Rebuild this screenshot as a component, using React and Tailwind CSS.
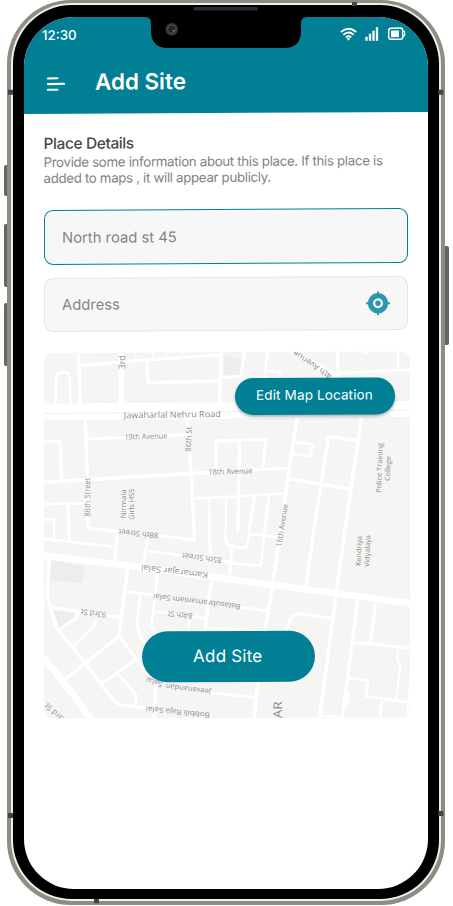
import React from 'react';

// Street segments, grouped by map quadrant: [path, stroke width]
const quadrants = [
  {
    at: 'translate(40 345) scale(0.33333)',
    roads: [
      ['M0 199 L580 197', 50],
      ['M117 20 L122 180', 11],
      ['M122 60 L320 44 L545 30', 11],
      ['M246 20 V180', 18],
      ['M322 44 L325 112 L545 108', 11],
      ['M545 20 L540 180', 10],
      ['M545 97 H585', 9],
      ['M47 180 L50 92 Q52 80 70 81 Q88 80 90 92 L93 180', 9],
      ['M288 20 V34', 8],
      ['M340 20 V32', 8],
      ['M385 20 V30', 8],
      ['M430 20 V28', 8],
      ['M137 222 L144 400 L145 548 L250 560', 11],
      ['M144 281 L440 268', 10],
      ['M442 225 L455 385 L465 575', 11],
      ['M10 410 L455 385 L570 380', 12],
      ['M10 288 H62 L67 405', 11],
      ['M530 375 V288 H580', 11],
      ['M10 475 L140 473', 9],
      ['M85 478 L90 590', 10],
      ['M10 522 H43 V590', 9],
      ['M465 460 L580 455', 9],
      ['M508 460 L512 575', 9],
    ],
  },
  {
    at: 'translate(225 345) scale(0.33333)',
    roads: [
      ['M0 196 L560 194', 48],
      ['M0 98 L50 93 L60 15', 9],
      ['M130 15 L120 100', 9],
      ['M128 80 H167 V98', 9],
      ['M190 10 L350 105', 20],
      ['M340 15 V100', 10],
      ['M340 86 L560 76', 9],
      ['M520 15 V76', 9],
      ['M423 15 V28', 13],
      ['M218 215 L190 400 L168 555', 12],
      ['M412 215 L380 430 L362 555', 12],
      ['M400 288 L312 275 L290 415 L268 555', 11],
      ['M193 403 L380 433', 11],
      ['M207 293 L265 298 L258 335 L205 328', 9],
      ['M0 287 L125 284 L115 370', 10],
      ['M45 287 L40 560', 11],
      ['M80 376 L192 370', 10],
      ['M0 457 L180 446', 9],
      ['M90 457 L72 565', 9],
      ['M133 455 L118 570', 9],
      ['M5 457 V555', 9],
    ],
  },
  {
    at: 'translate(40 530) scale(0.33333)',
    roads: [
      ['M10 74 L270 106 L580 149', 22],
      ['M0 23 L225 49', 9],
      ['M235 0 L225 95', 10],
      ['M325 20 L313 100', 10],
      ['M325 62 L550 92 L580 95', 9],
      ['M350 15 L465 30 V-10', 9],
      ['M509 -10 L513 80', 10],
      ['M30 85 L22 190 L35 240 L55 300 L100 350 L185 462 Q220 512 245 525 L330 533', 11],
      ['M30 230 L240 260', 10],
      ['M265 115 L238 315 L300 400 L340 450', 11],
      ['M262 185 L350 195', 9],
      ['M115 245 L112 262 L55 300', 9],
      ['M172 268 L165 285 L100 348', 9],
      ['M238 318 L70 452', 10],
      ['M295 383 L185 462', 10],
      ['M235 430 L290 495 L285 530', 9],
      ['M302 195 L293 275 Q294 320 325 350', 9],
      ['M355 125 L335 290 L350 320', 9],
      ['M345 243 L500 265', 9],
      ['M515 155 L495 305', 11],
      ['M450 270 L445 305', 9],
      ['M497 293 L680 304', 9],
      ['M10 378 L95 485 L165 580', 21],
      ['M350 455 L342 575', 11],
      ['M500 487 L600 496', 9],
    ],
  },
  {
    at: 'translate(225 530) scale(0.33333)',
    roads: [
      ['M0 146 L560 222', 21],
      ['M168 0 L145 160 L120 310', 12],
      ['M102 450 L88 570', 12],
      ['M268 0 L243 178', 11],
      ['M362 0 L335 190 L285 570', 12],
      ['M45 231 L130 243', 9],
      ['M183 310 L197 268 Q205 250 225 252 L320 266', 11],
      ['M400 212 L375 400 L352 570', 11],
      ['M453 220 L438 340', 10],
      ['M385 338 L560 356', 10],
      ['M372 445 L430 454 L424 500 L560 520', 9],
      ['M520 360 L518 396 L528 400 L515 512', 7],
      ['M472 515 L467 570', 10],
      ['M372 487 Q376 515 360 535', 9],
      ['M0 493 L95 502', 9],
      ['M285 558 L355 563', 9],
      ['M0 97 L108 108 L122 0', 9],
      ['M0 0 L8 46 L65 55 L75 12 L160 22', 9],
      ['M22 55 L15 145', 9],
      ['M40 0 L41 6', 10],
      ['M560 430 L548 570', 8],
    ],
  },
];

// Street labels: [text, centre x, centre y, rotation, length, font size]
const labels = [
  ['Jawaharlal Nehru Road', 172.8, 414.3, -0.6, 97, 8.6],
  ['19th Avenue', 146.3, 436, -1.5, 43, 7.2],
  ['3rd', 122.2, 362, -90, 14, 9],
  ['86th St', 189, 439, -88, 25, 7.6],
  ['86th Street', 88, 496.5, -90, 39, 7.6],
  ['Nirmala', 123.8, 503.5, -90, 29, 7.2],
  ['Girls HSS', 132, 504, -90, 31, 7.2],
  ['18th Avenue', 230.8, 471.3, -1.5, 44, 7.2],
  ['88th Street', 138.8, 533.5, 186, 40, 7.6],
  ['85th Street', 202.3, 558, 187, 40, 7.6],
  ['Kamarajar Salai', 175, 571.5, 187, 67, 8.6],
  ['Balasubramaniam Salai', 197.3, 601.5, 187, 88, 7.4],
  ['84th St', 180.5, 614.8, 185, 25, 7.6],
  ['93rd St', 94, 613, 188, 26, 7.6],
  ['Jeevanandan', 188.8, 689, 187, 45, 7.4],
  ['Salai', 155, 681.8, 203, 17, 7.4],
  ['Bobbili Raja Salai', 178.3, 712, 186, 64, 7.4],
  ['93rd St', 56, 713, 222, 27, 7.6],
  ['16th Avenue', 282.3, 525.5, -81, 43, 7.6],
  ['4th Avenue', 312.8, 365, 214, 45, 8.2],
  ['Police Training', 379.8, 468.5, -88, 50, 7],
  ['College', 388.2, 469, -88, 25, 7],
  ['Kendriya', 359.3, 551.5, -88, 30, 7],
  ['Vidyalaya', 367.8, 551.5, -88, 32, 7],
  ['AR', 278.5, 710, -90, 17, 12],
];

function StreetMap() {
  return (
    <svg viewBox="44.5 352 365.5 366" preserveAspectRatio="none" className="block h-[366px] w-[365.5px]">
      <rect x="44" y="352" width="367" height="367" fill="#f5f5f4" />
      <g fill="#eceeed">
        <path d="M51.500 559.500 L85.700 566 L83.300 582.600 L50 580Z" />
        <path d="M51.500 609 L75 611.500 L72 621 L58 628.500Z" />
        <path d="M225 355 L242 360 L241 376 L225 377Z" />
      </g>
      {['#f0f1f1', '#ffffff'].map((color, pass) => (
        <g key={color} fill="none" stroke={color} strokeLinejoin="round">
          {quadrants.map((q) => (
            <g key={q.at} transform={q.at}>
              {q.roads.map(([d, w]) => (
                <path key={d} d={d} strokeWidth={pass ? w : w + 3} />
              ))}
            </g>
          ))}
        </g>
      ))}
      <path d="M44 413 L410 410.500 M386 413 Q401 423 410 438" fill="none" stroke="#e9ebea" strokeWidth="0.8" />
      <g fill="#8d8d8d" fontFamily='"Open Sans", "Noto Sans", sans-serif' textAnchor="middle">
        {labels.map(([t, x, y, r, len, size]) => (
          <text
            key={t + x}
            transform={`translate(${x} ${y}) rotate(${r})`}
            y={size * 0.36}
            fontSize={size}
            textLength={len}
            lengthAdjust="spacingAndGlyphs"
          >
            {t}
          </text>
        ))}
      </g>
    </svg>
  );
}

function StatusIcons() {
  return (
    <svg viewBox="340 26 66 15" className="mt-[1.500px] h-[15px] w-[66px]" fill="none" stroke="#fff">
      <path d="M340.800 31.700 Q348.500 25.200 356.200 31.700 M343.300 34.500 Q348.500 30 353.700 34.500 M345.800 37 Q348.500 34.900 351.200 37" strokeWidth="1.900" />
      <path d="M346.700 38.200 Q348.500 36.900 350.300 38.200 L348.500 40.300Z" fill="#fff" stroke="none" />
      <path d="M366.500 40.500 V36.500 M370 40.500 V33.500 M373.500 40.500 V30.500 M377 40.500 V27" strokeWidth="2.300" />
      <rect x="388.700" y="28" width="14" height="11.200" rx="2.300" strokeWidth="1.500" />
      <rect x="391" y="30.300" width="8" height="6.700" fill="#fff" stroke="none" />
      <path d="M403 30.500 Q404.800 31 404.800 33.600 Q404.800 36.200 403 36.700" strokeWidth="1.300" />
    </svg>
  );
}

// Everything drawn over the bezel: notch, speaker, camera and antenna bands
function PhoneDetails() {
  return (
    <svg viewBox="0 0 453 906" className="pointer-events-none absolute inset-0 size-full">
      <path d="M140 5 V17 H145 Q151 17 151 23 V31 Q151 48 168 48 H284 Q301 48 301 31 V23 Q301 17 307 17 H315 V5Z" fill="#000" />
      <rect x="193.500" y="7" width="64.500" height="3.500" rx="1.500" fill="#2b2d30" />
      <circle cx="171.700" cy="29.300" r="6.300" fill="#38383b" />
      <circle cx="171.700" cy="29.300" r="3.900" fill="#222225" stroke="#55555a" strokeWidth="0.700" />
      <circle cx="173.500" cy="30.800" r="1" fill="#8b8b90" />
      <path d="M8 92.300 H13 M8 815.500 H13 M438.300 92.300 H443.300 M438.300 813.500 H443.300" stroke="#444446" strokeWidth="5" />
      <path d="M354.500 2 V6 M96.500 899 V903.300" stroke="#444446" strokeWidth="5" />
    </svg>
  );
}

function LocateIcon() {
  return (
    <svg viewBox="0 0 24 24" className="size-6">
      <circle cx="12" cy="12" r="7.600" fill="none" stroke="#2b98b0" strokeWidth="5.200" />
      <circle cx="12" cy="12" r="2.700" fill="#2b98b0" />
      <path d="M12 0 V4 M12 20 V24 M0 12 H4 M20 12 H24" stroke="#2b98b0" strokeWidth="2" />
    </svg>
  );
}

export default function App() {
  return (
    <div className="relative flex h-[906px] w-[453px] items-start overflow-hidden bg-white font-['Inter',sans-serif]">
      {/* volume side */}
      <div className="flex w-[7px] shrink-0 flex-col items-end pt-[165px]">
        <div className="h-[31px] w-[3.500px] rounded-l-xs bg-[#676466]" />
        <div className="mt-7 h-[63px] w-[3.500px] rounded-l-xs bg-[#676466]" />
        <div className="mt-4 h-[63px] w-[3.500px] rounded-l-xs bg-[#676466]" />
      </div>

      {/* phone body */}
      <div className="h-[904.500px] w-[437.500px] shrink-0 rounded-[64px] bg-[#8d8d84] px-[3.500px] pb-[3.500px] pt-[3px]">
        <div className="h-full rounded-[61px] bg-[#f1efe9] p-[2.300px]">
          <div className="h-full rounded-[59px] bg-black pb-[10.200px] pl-[11.200px] pr-[10.700px] pt-[11.700px]">
            <main className="flex h-full flex-col overflow-hidden rounded-[50px] bg-white">
              <header className="-mt-1 flex h-[100.200px] shrink-0 skew-y-[-0.300deg] flex-col bg-[#018095] pt-1 text-white">
                <div className="flex items-start justify-between pl-[18px] pr-[22px] pt-2">
                  <span className="mt-px text-[13.300px] font-medium leading-4">12:30</span>
                  <StatusIcons />
                </div>
                <div className="mt-[23px] flex items-center pl-[23px]">
                  <svg viewBox="0 0 18 14" className="mt-[3px] h-3.5 w-[18px]" stroke="#fff" strokeWidth="2.100" strokeLinecap="round">
                    <path d="M1 1.500 L10.500 1.300 M1 7.200 L17 6.900 M1 12.800 H10.500" />
                  </svg>
                  <h1 className="ml-[30px] whitespace-nowrap text-[22.400px] font-semibold leading-8">Add Site</h1>
                </div>
              </header>

              <section className="flex skew-y-[-0.300deg] flex-col px-5 pt-5">
                <h2 className="-ml-[0.500px] whitespace-nowrap text-[15.500px] font-medium leading-5 tracking-[-0.400px] text-[#48484b]">Place Details</h2>
                <p className="-ml-[0.500px] whitespace-nowrap text-[13.300px] font-normal leading-[16px] tracking-[-0.330px] text-[#828285]">
                  Provide some information about this place. If this place is
                  <br />
                  added to maps , it will appear publicly.
                </p>
                <div className="mt-6 flex h-[54.500px] w-[364px] items-center rounded-[9px] border border-[#018095] bg-[#f7f7f7] pl-[17px] pt-px text-[14.800px] text-[#858588]">
                  North road st 45
                </div>
                <div className="mt-[13px] flex h-[54.500px] w-[364px] items-center justify-between rounded-[9px] border border-[#e6e6e6] bg-[#f7f7f7] px-[17px] pt-px text-[14.800px] text-[#858588]">
                  Address
                  <LocateIcon />
                </div>
              </section>

              <section className="ml-[20.500px] mt-[20.700px] grid h-[366px] w-[365.500px] shrink-0 skew-y-[-0.200deg] overflow-hidden rounded-[9px]">
                <div className="col-start-1 row-start-1">
                  <StreetMap />
                </div>
                <div className="col-start-1 row-start-1 flex flex-col justify-between pb-[36.500px] pl-[98px] pr-[15px] pt-[25.500px]">
                  <button className="h-[37px] w-[160px] self-end whitespace-nowrap rounded-full bg-[#018095] pb-0.5 text-[13.500px] font-normal tracking-[0.130px] text-white shadow-[0_2px_3px_rgba(0,0,0,0.3)]">
                    Edit Map Location
                  </button>
                  <button className="h-[50.500px] w-[172.500px] whitespace-nowrap rounded-full bg-[#018095] pr-px pt-px text-[17px] font-normal tracking-[0.200px] text-white">
                    Add Site
                  </button>
                </div>
              </section>
            </main>
          </div>
        </div>
      </div>

      {/* power side */}
      <div className="flex flex-col pt-[246px]">
        <div className="h-[99px] w-1 rounded-r-xs bg-[#676466]" />
      </div>

      <PhoneDetails />
    </div>
  );
}
